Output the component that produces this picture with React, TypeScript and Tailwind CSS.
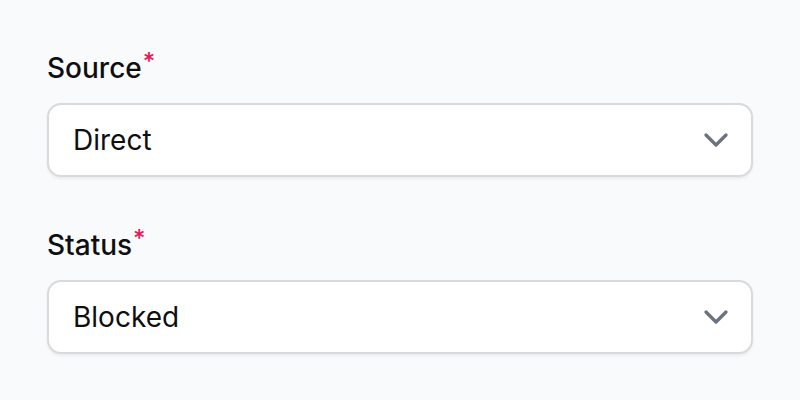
import React from "react";

function Chevron() {
  return (
    <svg width="40" height="40" viewBox="0 0 24 24" fill="none" stroke="#6b7280" strokeWidth="2" strokeLinecap="round" strokeLinejoin="round">
      <path d="m6 9 6 6 6-6" />
    </svg>
  );
}

function Field({ label, value }: { label: string; value: string }) {
  return (
    <div className="flex flex-col">
      <div className="flex items-start text-[28px] leading-[40px] font-medium text-[#0f0f12]">
        <span>{label}</span>
        <span className="text-[24px] leading-[24px] mt-[2px] ml-[1px] text-[#ec1654]">*</span>
      </div>
      <div className="mt-[15px] h-[74px] flex items-center justify-between rounded-[14px] border-2 border-[#d9dadd] bg-white pl-[24px] pr-[15px] shadow-[0_2px_3px_rgba(0,0,0,0.06)]">
        <span className="text-[28px] text-[#0f0f12]">{value}</span>
        <Chevron />
      </div>
    </div>
  );
}

export default function App() {
  return (
    <div
      className="w-[800px] h-[400px] bg-[#f9fafb] px-[47px] pt-[48px] flex flex-col gap-[48px]"
      style={{ fontFamily: "Inter, 'Noto Sans', sans-serif" }}
    >
      <Field label="Source" value="Direct" />
      <Field label="Status" value="Blocked" />
    </div>
  );
}
